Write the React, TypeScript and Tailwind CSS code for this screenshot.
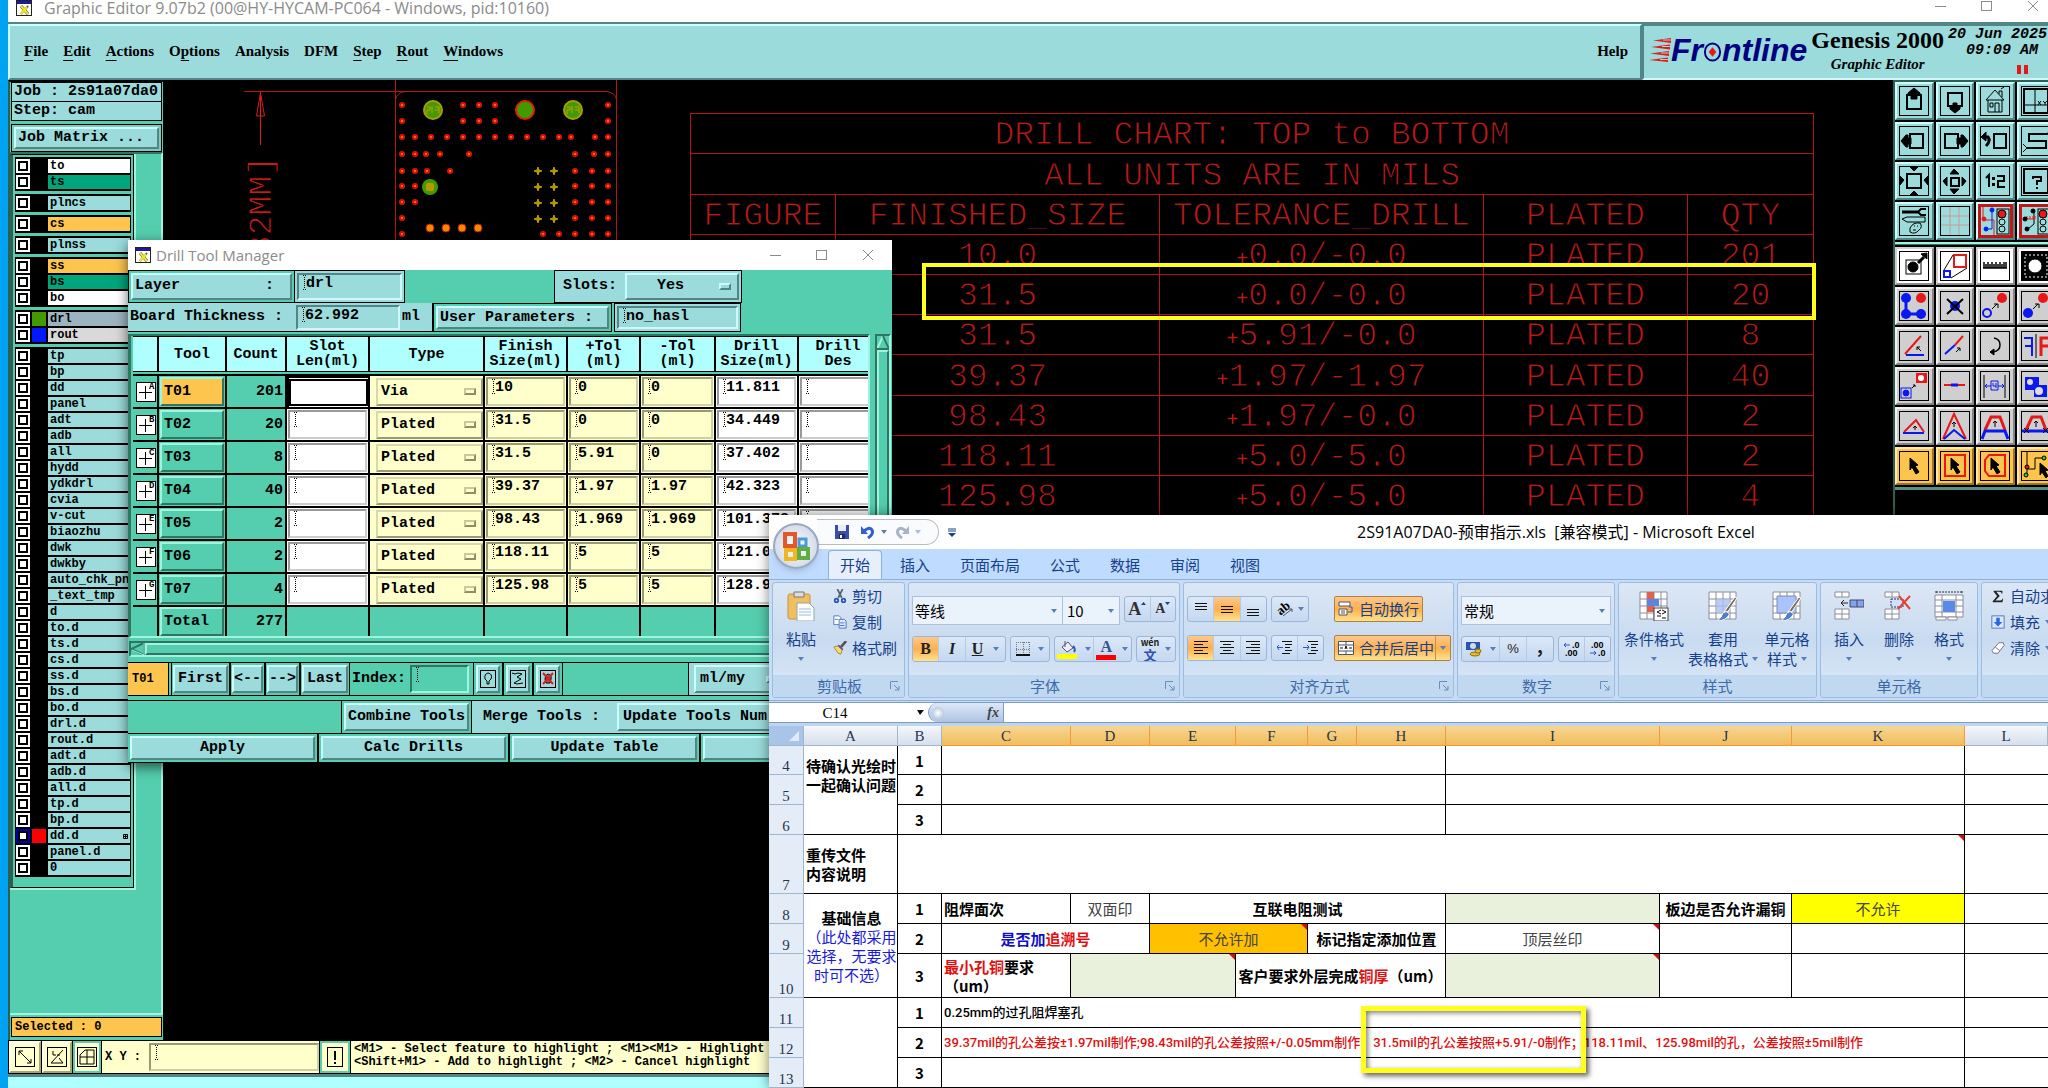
import React from "react";

/* ---------- shared style fragments ---------- */

const mono = "font-['Liberation_Mono','DejaVu_Sans_Mono',monospace] font-bold";
const cjk = "font-['Noto_Sans_CJK_SC','Open_Sans',sans-serif]";
const cyanUp =
  "bg-[#9bdbdb] border-2 border-t-[#c9ffff] border-l-[#c9ffff] border-b-[#528585] border-r-[#528585]";
const cyanDown =
  "bg-[#9bdbdb] border-2 border-t-[#528585] border-l-[#528585] border-b-[#d0f8f8] border-r-[#d0f8f8]";
const greenUp =
  "bg-[#54ceae] border-2 border-t-[#a0f3df] border-l-[#a0f3df] border-b-[#2f7561] border-r-[#2f7561]";
const greenDown =
  "bg-[#54ceae] border-2 border-t-[#2f7561] border-l-[#2f7561] border-b-[#a0f3df] border-r-[#a0f3df]";

function XLogo() {
  return (
    <svg viewBox="0 0 16 16" className="h-4 w-4 shrink-0">
      <rect x="0.5" y="0.5" width="15" height="15" fill="#fff" stroke="#222" />
      <rect x="1" y="1" width="14" height="3" fill="#1a1a9a" />
      <path d="M12 6l-7 8" stroke="#555" strokeWidth="2" />
      <path d="M5 6l7 8" stroke="#555" strokeWidth="3" />
      <path d="M5 6l7 8M11 7l-6 7" stroke="#f3e71d" strokeWidth="2" />
    </svg>
  );
}

function WindowButtons({ gap }: { gap: string }) {
  return (
    <div className={"flex items-center text-[#8b8b8b] " + gap}>
      <button aria-label="Minimize">
        <svg viewBox="0 0 12 12" className="h-3 w-3"><path d="M0 6.5h11" stroke="currentColor" /></svg>
      </button>
      <button aria-label="Maximize">
        <svg viewBox="0 0 12 12" className="h-3 w-3"><rect x="0.5" y="1.5" width="10" height="9" fill="none" stroke="currentColor" /></svg>
      </button>
      <button aria-label="Close">
        <svg viewBox="0 0 12 12" className="h-3 w-3"><path d="M1 1l10 10M11 1L1 11" stroke="currentColor" /></svg>
      </button>
    </div>
  );
}

/* ---------- Genesis header ---------- */

const menus: [string, string, string][] = [
  ["", "F", "ile"],
  ["", "E", "dit"],
  ["", "A", "ctions"],
  ["O", "p", "tions"],
  ["Analysis", "", ""],
  ["DFM", "", ""],
  ["", "S", "tep"],
  ["", "R", "out"],
  ["", "W", "indows"],
];

function MenuBar() {
  return (
    <header className="flex h-[56px] shrink-0 bg-[#9bdbdb] font-['Liberation_Serif',serif] text-[15px] font-bold text-black">
      <nav className={"flex flex-1 items-center gap-[15px] pr-3 pb-[2px] pl-[14px] " + cyanUp}>
        {menus.map(([a, u, b]) => (
          <button key={a + u + b} className="whitespace-nowrap">
            {a}
            {u && <span className="underline underline-offset-4">{u}</span>}
            {b}
          </button>
        ))}
        <button className="ml-auto">Help</button>
      </nav>
      <div className="flex w-[406px] shrink-0 items-start overflow-hidden border-2 border-t-[#528585] border-l-[#528585] border-r-0 border-b-[#d0f8f8] pl-[5px]">
        <div className="flex h-[48px] shrink-0 items-center" role="img" aria-label="Frontline">
          <svg viewBox="0 0 22 24" className="h-6 w-[22px]">
            <path d="M4 2.500L22 0v5zM2 9L21 6.500v5zM1 15.500L20 13v5zM0 22L19 19.500v4.500z" fill="#e81818" />
            <path d="M14 2h8M13 8.500h8M12 15h8M11 21.500h8" stroke="#9bdbdb" strokeWidth="1" />
          </svg>
          <div className="flex items-center font-['Liberation_Sans',sans-serif] text-[32px] leading-8 font-bold text-[#000080] italic">
            <span>Fr</span>
            <svg viewBox="0 0 20 20" className="mt-1 h-5 w-[19px]">
              <ellipse cx="10" cy="10" rx="8" ry="9" fill="none" stroke="#000080" strokeWidth="2" />
              <path d="M10 5l4 5-4 5-4-5z" fill="#e81818" />
            </svg>
            <span>ntline</span>
          </div>
        </div>
        <div className="ml-[4px] shrink-0 text-center">
          <div className="text-2xl leading-7">Genesis 2000</div>
          <div className="text-[15px] leading-5 italic">Graphic Editor</div>
        </div>
        <div className={"ml-[4px] shrink-0 text-[15px] leading-4 whitespace-pre italic " + mono}>
          <div className="mt-px">20 Jun 2025</div>
          <div>{"  09:09 AM"}</div>
          <div className="mt-[6px] ml-[69px] flex gap-[3px]">
            <i className="h-[9px] w-1 bg-[#e81818]" />
            <i className="h-[9px] w-1 bg-[#e81818]" />
          </div>
        </div>
      </div>
    </header>
  );
}

/* ---------- layer list ---------- */

type Layer = { name: string; bg?: string; swatch?: string; active?: boolean };
const plain = (s: string): Layer[] => s.split(" ").map((name) => ({ name }));

const layerGroups: Layer[][] = [
  [{ name: "to", bg: "bg-white" }, { name: "ts", bg: "bg-[#00a57c]" }],
  [{ name: "plncs" }],
  [{ name: "cs", bg: "bg-[#fdc54e]" }],
  [{ name: "plnss" }],
  [
    { name: "ss", bg: "bg-[#fdc54e]" },
    { name: "bs", bg: "bg-[#00a57c]" },
    { name: "bo", bg: "bg-white" },
  ],
  [
    { name: "drl", bg: "bg-[#9bb4c0]", swatch: "bg-[#439a00]" },
    { name: "rout", bg: "bg-[#d9d9d9]", swatch: "bg-[#0019ff]" },
  ],
  [
    ...plain(
      "tp bp dd panel adt adb all hydd ydkdrl cvia v-cut biaozhu dwk dwkby auto_chk_pn _text_tmp d to.d ts.d cs.d ss.d bs.d bo.d drl.d rout.d adt.d adb.d all.d tp.d bp.d",
    ),
    { name: "dd.d", swatch: "bg-[#ff0000]", active: true },
    ...plain("panel.d 0"),
  ],
];

function LayerRow({ layer }: { layer: Layer }) {
  return (
    <label className="flex h-4 items-center">
      <input
        type="checkbox"
        className={
          "h-[14px] w-[14px] shrink-0 appearance-none border-2 bg-white outline-2 -outline-offset-4 outline-black " +
          (layer.active ? "border-[#0000a8]" : "border-white")
        }
      />
      <span className={"mx-[2px] h-[14px] w-[14px] shrink-0 " + (layer.swatch ?? "bg-black")} />
      <span
        className={
          "flex h-[14px] flex-1 items-center justify-between overflow-hidden px-[2px] text-xs leading-[14px] " +
          (layer.bg ?? "bg-[#9bdbdb]")
        }
      >
        {layer.name}
        {layer.active && (
          <svg viewBox="0 0 5 5" className="h-[5px] w-[5px]">
            <path d="M.5.500h4v4h-4zM2.500 0v5M0 2.500h5" fill="none" stroke="#000" />
          </svg>
        )}
      </span>
    </label>
  );
}

function SidePanel() {
  return (
    <aside className={"flex w-[155px] shrink-0 flex-col border-t-2 border-l-2 border-black border-l-[#2f5f52] bg-[#54ceae] text-[15px] text-black " + mono}>
      <div className="mx-px border border-black bg-[#9bdbdb] px-[2px] leading-[18px]">Job : 2s91a07da0</div>
      <div className="mx-px border border-t-0 border-black bg-[#9bdbdb] px-[2px] leading-[18px]">Step: cam</div>
      <div className="mx-px mt-[3px] border border-black bg-[#7fc9bb] p-[2px]">
        <button className={"block h-[22px] w-full px-[2px] text-left leading-[18px] " + cyanUp}>Job Matrix ...</button>
      </div>
      <div className="flex flex-1 flex-col items-start border-t-2 border-r-2 border-b-2 border-t-[#2f7561] border-r-[#a0f3df] border-b-[#a0f3df]">
        <div className="w-[126px] border-r-2 border-b-2 border-r-[#a0f3df] border-b-[#a0f3df]">
          <div className="flex flex-col gap-[3px] border border-l-[3px] border-black border-l-[#2f5f52] px-[2px] pt-[2px] pb-[10px]">
            {layerGroups.map((g, i) => (
              <div key={i} className="border border-black bg-black">
                {g.map((l) => (
                  <LayerRow key={l.name} layer={l} />
                ))}
              </div>
            ))}
          </div>
        </div>
      </div>
      <div className="mx-px mt-[2px] mb-[3px] border border-black bg-[#fdc54e] px-[3px] text-xs leading-[18px]">Selected : 0</div>
    </aside>
  );
}

/* ---------- board drawing ---------- */

const dots: [number, number][] = [
  ...[402, 463, 479, 495, 608].map((x) => [x, 105] as [number, number]),
  ...[402, 463, 479, 495, 608].map((x) => [x, 121] as [number, number]),
  ...[402, 415, 431, 447, 463, 479, 495, 511, 527, 543, 559, 571, 595, 608].map((x) => [x, 137] as [number, number]),
  ...[402, 415, 426, 440, 469, 575, 594, 608].map((x) => [x, 154] as [number, number]),
  ...[402, 415, 427, 450, 575, 592, 608].map((x) => [x, 171] as [number, number]),
  ...[402, 415, 575, 592, 608].map((x) => [x, 186] as [number, number]),
  ...[402, 415, 575, 592, 608].map((x) => [x, 202] as [number, number]),
  ...[402, 575, 592, 608].map((x) => [x, 218] as [number, number]),
  ...[402, 543, 559, 575, 592, 608].map((x) => [x, 234] as [number, number]),
];

function Board() {
  return (
    <svg viewBox="163 80 500 170" className="absolute top-0 left-0 h-[170px] w-[500px]">
      <g fill="none" stroke="#b51414" strokeWidth="1">
        <path d="M244 91.500H607Q616 93 616.500 100" />
        <path d="M395.500 80V250M616.500 80V250M395.500 100Q397 92 406 91.500" />
        <path d="M260.500 92V145M260.500 93l-4 23h8z" stroke="#e01a1a" />
      </g>
      <text
        transform="translate(271 255) rotate(-90)"
        className="font-['Liberation_Mono',monospace] text-[33px]"
        fill="#c81a1a"
        stroke="#000"
        strokeWidth="1"
      >
        82MM]
      </text>
      {dots.map(([x, y]) => (
        <g key={x + "-" + y}>
          <circle cx={x} cy={y} r="3" fill="#e01000" />
          <circle cx={x} cy={y} r="1" fill="#f08a1a" />
        </g>
      ))}
      {[171, 187, 203, 219].flatMap((y) =>
        [538, 554].map((x) => (
          <path key={x + "-" + y} d={`M${x} ${y - 4}l1 3 3 1-3 1-1 3-1-3-3-1 3-1z`} fill="#b79a00" stroke="#b79a00" strokeWidth="1" />
        )),
      )}
      {[430, 446, 462, 478].map((x) => (
        <circle key={x} cx={x} cy="228" r="4" fill="#f08a00" stroke="#c02000" strokeWidth="1" />
      ))}
      {[433, 573].map((x) => (
        <g key={x} fill="none" stroke="#a8a000">
          <circle cx={x} cy="110" r="9" fill="#439a00" strokeWidth="2" />
          <path d={`M${x - 6} 107h3v3h-3v4M${x - 1} 106v7M${x + 2} 107h4v6M${x + 2} 110h4`} stroke="#c0a000" />
        </g>
      ))}
      <circle cx="525" cy="110" r="9" fill="#439a00" stroke="#e02000" strokeWidth="2" />
      <circle cx="430" cy="187" r="8" fill="#439a00" />
      <rect x="426" y="183" width="8" height="8" rx="2" fill="#b79a00" />
    </svg>
  );
}

const chartRows: [string, string, string, string][] = [
  ["10.0", "0.0/-0.0", "PLATED", "201"],
  ["31.5", "0.0/-0.0", "PLATED", "20"],
  ["31.5", "5.91/-0.0", "PLATED", "8"],
  ["39.37", "1.97/-1.97", "PLATED", "40"],
  ["98.43", "1.97/-0.0", "PLATED", "2"],
  ["118.11", "5.0/-5.0", "PLATED", "2"],
  ["125.98", "5.0/-5.0", "PLATED", "4"],
  ["", "", "", ""],
];

function DrillChart() {
  const c = "border-b border-r border-[#b51414] p-0 pt-[5px] font-normal";
  return (
    <div className="absolute top-[33px] left-[527px]">
      <table className="w-[1123px] table-fixed border-separate border-spacing-0 border-t border-l border-[#b51414] text-center font-['Liberation_Mono',monospace] text-[33px] leading-[34px] whitespace-nowrap text-[#b81a1a] [-webkit-text-stroke:1px_black]">
        <colgroup>
          <col className="w-[145px]" />
          <col className="w-[324px]" />
          <col className="w-[324px]" />
          <col className="w-[204px]" />
          <col className="w-[126px]" />
        </colgroup>
        <tbody>
          <tr className="h-10"><th colSpan={5} className={c}>DRILL CHART: TOP to BOTTOM</th></tr>
          <tr className="h-[41px]"><th colSpan={5} className={c}>ALL UNITS ARE IN MILS</th></tr>
          <tr className="h-10">
            {["FIGURE", "FINISHED_SIZE", "TOLERANCE_DRILL", "PLATED", "QTY"].map((h) => (
              <th key={h} className={c}>{h}</th>
            ))}
          </tr>
          {chartRows.map((r, i) => (
            <tr key={i} className={i === 3 ? "h-[41px]" : "h-10"}>
              <td className={c} />
              <td className={c}>{r[0]}</td>
              <td className={c}>
                {r[1] && <span className="text-xl [-webkit-text-stroke:0px]">+</span>}
                {r[1]}
              </td>
              <td className={c}>{r[2]}</td>
              <td className={c}>{r[3]}</td>
            </tr>
          ))}
        </tbody>
      </table>
      <div className="absolute top-[150px] left-[232px] h-[57px] w-[894px] border-4 border-[#ffff1a]" />
    </div>
  );
}

/* ---------- right tool palette ---------- */

const R = "#e81818";
const B = "#0a19f0";
const cursor = <path d="M11 7l8 7-3 1 4 6-3 2-4-7-2 3z" fill="#000" />;
const light = (extra: React.ReactNode) => (
  <>
    <rect x="17" y="3" width="12" height="25" fill="#9bdbdb" stroke="#000" strokeWidth="1" />
    <circle cx="22" cy="8" r="4" fill={R} stroke="#000" />
    <circle cx="22" cy="16" r="3" />
    <circle cx="22" cy="23" r="3" />
    {extra}
  </>
);

const iconRows: { tone: string; icons: React.ReactNode[] }[] = [
  {
    tone: "cyan",
    icons: [
      <><rect x="8" y="9" width="14" height="14" strokeWidth="2" /><path d="M15 2l6 5v2h-3v4h-6V9H9V7z" fill="#000" /></>,
      <><rect x="8" y="7" width="14" height="13" strokeWidth="2" /><path d="M15 27l5-4v-2h-3v-4h-4v4h-3v2z" fill="#000" /></>,
      <path d="M6 14L15 4l9 10zM8 14v12h14V14M15 26V17h4v9M10 17h3v4h-3zM19 8V5h3v6M21 3l3-2" />,
      <><rect x="3" y="3" width="24" height="24" strokeWidth="2" /><path d="M14 3v24M3 19h24M17 15l3 4M20 15l-3 4M22 15l2 2 2-2M24 17v2" /></>,
    ],
  },
  {
    tone: "cyan",
    icons: [
      <><rect x="11" y="8" width="13" height="14" strokeWidth="2" /><path d="M2 15l5-6h2v3h3v6H9v3H7z" fill="#000" /></>,
      <><rect x="5" y="8" width="13" height="14" strokeWidth="2" /><path d="M28 15l-5-6h-2v3h-4v6h4v3h2z" fill="#000" /></>,
      <><rect x="14" y="8" width="12" height="14" strokeWidth="2" /><path d="M4 11h4q3 4-2 9" strokeWidth="3" /><path d="M1 11l5-5v9z" fill="#000" /></>,
      <><path d="M26 8H8v7h17v7H6" strokeWidth="2" /><path d="M26 8l3-4M26 8l3 2M6 22l-4-4M6 22l-4 4" /></>,
    ],
  },
  {
    tone: "cyan",
    icons: [
      <><rect x="8" y="8" width="14" height="14" strokeWidth="2" /><path d="M11 1h8l-4 4zM11 29h8l-4-4zM1 10v9l4-5zM29 10v9l-4-5z" fill="#000" /></>,
      <><rect x="11" y="12" width="8" height="8" strokeWidth="2" /><path d="M10 8h9l-5-5zM10 23h9l-5 5zM7 11v9l-4-5zM22 11v9l4-5z" fill="#000" /></>,
      <><path d="M6 12l3-3v12" strokeWidth="2" /><path d="M13 12h1v1h-1zM13 18h1v1h-1z" strokeWidth="2" /><path d="M17 10h7v5h-6v6h7" strokeWidth="2" /></>,
      <><rect x="3" y="3" width="24" height="24" strokeWidth="2" /><path d="M12 13v-2h8v4h-4v4M16 21v2" strokeWidth="2" /></>,
    ],
  },
  {
    tone: "cyan",
    icons: [
      <><path d="M3 6h16" strokeWidth="3" /><path d="M27 3h-5l-3 3 3 3h5" strokeWidth="2" /><path d="M3 13l5-2h18v5H8z" /><path d="M11 22q3-6 10-5 3 4-1 7-4 5-9 2zM15 20h1M18 20h1M14 24h3" /></>,
      <path d="M10 1v28M19 1v28M1 10h28M1 19h28" stroke="#c99" />,
      light(<><path d="M3 1v13h11v15" stroke={R} strokeWidth="1" /><path d="M12 5v18H6" stroke={B} strokeWidth="1" /><circle cx="12" cy="4" r="2" fill={B} stroke={B} /><circle cx="4" cy="13" r="2" fill={R} stroke={R} /><circle cx="6" cy="23" r="2" fill={B} stroke={B} /></>),
      light(<><path d="M13 5v13l-6 5" /><path d="M6 10v3h8v-3M9 10v3M12 10v3" stroke={R} /><circle cx="12" cy="5" r="2" fill="#000" /><circle cx="4" cy="13" r="2" fill="#000" /><circle cx="6" cy="23" r="2" fill="#000" /></>),
    ],
  },
];

const iconRows2: { tone: string; icons: React.ReactNode[] }[] = [
  {
    tone: "white",
    icons: [
      <><rect x="7" y="9" width="15" height="14" /><circle cx="14" cy="16" r="5" fill="#000" /><path d="M19 12l6-6" strokeWidth="3" /><path d="M28 2v6l-6-5z" fill="#000" /></>,
      <><rect x="14" y="4" width="12" height="12" stroke={R} strokeWidth="2" /><rect x="4" y="20" width="6" height="6" stroke={B} strokeWidth="2" /><path d="M4 19L13 4M11 27l16-10" /></>,
      <path d="M3 17h24M4 11v6M6 13v4M8 11v6M10 13v4M12 11v6M14 13v4M16 11v6M18 13v4M20 11v6M22 13v4M24 11v6M26 11v6" strokeWidth="1.5" />,
      <><rect x="1" y="1" width="28" height="28" fill="#000" /><rect x="4" y="4" width="22" height="22" stroke="#fff" strokeDasharray="2 2" /><circle cx="14" cy="15" r="7" fill="#fff" /></>,
    ],
  },
  {
    tone: "grey",
    icons: [
      <><path d="M7 8v15h15" stroke={B} strokeWidth="3" /><g fill={B} stroke="none"><circle cx="7" cy="7" r="5" /><circle cx="7" cy="23" r="5" /><circle cx="22" cy="23" r="5" /></g><circle cx="22" cy="7" r="5" fill={R} stroke="none" /></>,
      <><circle cx="15" cy="15" r="5" fill={B} stroke="none" /><path d="M7 8l16 15M23 8L7 23" strokeWidth="2" /></>,
      <><circle cx="7" cy="22" r="4" stroke={B} strokeWidth="2" /><circle cx="22" cy="7" r="5" fill={R} stroke="none" /><path d="M12 18l5-5M14 13h4v4" /></>,
      <><circle cx="7" cy="22" r="5" fill={B} stroke="none" /><circle cx="22" cy="7" r="5" fill={R} stroke="none" /><path d="M12 18l5-5M14 13h4v4" /></>,
    ],
  },
  {
    tone: "grey",
    icons: [
      <><path d="M6 23L22 5" stroke={R} strokeWidth="2" /><path d="M7 24h18" stroke={B} strokeWidth="2" /><path d="M22 20l-4-4M18 19v-3h3" /></>,
      <><path d="M15 14l8-9" stroke={R} strokeWidth="2" /><path d="M5 23l10-9" stroke={B} strokeWidth="2" /><path d="M16 21l4-4M17 17h3v3" /></>,
      <><path d="M14 7q6 1 6 7 0 6-7 7" strokeWidth="1.5" /><path d="M10 21l4-3v6z" fill="#000" /></>,
      <><path d="M15 3v24" /><path d="M3 7h8v18M11 15H4" stroke={B} strokeWidth="2" /><path d="M28 7h-8v18M20 15h7" stroke={R} strokeWidth="3" /></>,
    ],
  },
  {
    tone: "grey",
    icons: [
      <><rect x="2" y="17" width="10" height="10" stroke={B} /><circle cx="7" cy="22" r="3" fill={B} stroke={B} /><rect x="17" y="2" width="11" height="10" fill={R} stroke="none" /><circle cx="22" cy="7" r="3" fill="#fff" stroke="none" /><path d="M13 17l3-3M14 14h2v2" /></>,
      <><path d="M4 14h21" stroke={R} strokeWidth="2" /><path d="M11 14h7" stroke={B} strokeWidth="3" /></>,
      <><path d="M4 4v23M25 4v23" /><path d="M11 10h7v9h-7zM13 12v3h3M16 12v5M5 15h6M18 15h6M7 13l-2 2 2 2M22 13l2 2-2 2" stroke={B} /></>,
      <><path d="M4 6h14v8h8v12H13v-7H4z" fill={B} stroke="none" /><circle cx="9" cy="11" r="3" fill="#ddd" stroke="none" /><circle cx="18" cy="20" r="4" fill="#ddd" stroke="none" /></>,
    ],
  },
  {
    tone: "grey",
    icons: [
      <><path d="M5 21L17 9l8 12" stroke={R} strokeWidth="2" /><path d="M4 22h21" stroke={B} strokeWidth="2" /><path d="M16 19v-4M14 17l2-2 2 2" /></>,
      <><path d="M3 28L14 3l12 25" stroke={R} strokeWidth="2" /><path d="M4 28l10-9 11 9" stroke={B} strokeWidth="2" /><path d="M14 16v-5M12 13l2-2 2 2" /></>,
      <><path d="M5 19l6-13h9l5 13" stroke={R} strokeWidth="3" /><path d="M2 28l3-8h20l3 8" stroke={B} strokeWidth="3" /><path d="M15 16v-6M13 12l2-2 2 2" /></>,
      <><path d="M5 19l6-13h9l5 13" stroke={R} strokeWidth="3" /><path d="M1 20h28" stroke={B} strokeWidth="3" /><path d="M15 16v-6M13 12l2-2 2 2M3 17l5 5M8 17l-5 5M22 17l5 5M27 17l-5 5" /></>,
    ],
  },
  {
    tone: "orange",
    icons: [
      cursor,
      <><rect x="5" y="4" width="20" height="21" stroke={R} strokeWidth="2" />{cursor}</>,
      <><path d="M9 4h16v21H9l-4-5V9z" stroke={R} strokeWidth="2" />{cursor}</>,
      <><path d="M6 1v14" /><path d="M23 7h-9v11H6v6" /><circle cx="23" cy="7" r="2" fill="#3c3" /><circle cx="6" cy="16" r="2" fill={R} /><circle cx="5" cy="24" r="2" fill="#3c3" /><path d="M19 12l8 7-3 1 3 5-2 2-4-6-2 3z" fill="#000" /></>,
    ],
  },
];

const tones: Record<string, string> = {
  cyan: cyanUp,
  white: "bg-white border-2 border-t-[#d0d0d0] border-l-[#d0d0d0] border-b-[#8c8c8c] border-r-[#8c8c8c]",
  grey: "bg-[#cfcfcf] border-2 border-t-[#f2f2f2] border-l-[#f2f2f2] border-b-[#858585] border-r-[#858585]",
  orange: "bg-[#fdc54e] border-2 border-t-[#ffe8a8] border-l-[#ffe8a8] border-b-[#9a7526] border-r-[#9a7526]",
};

function IconGrid({ rows }: { rows: { tone: string; icons: React.ReactNode[] }[] }) {
  return (
    <div className="grid w-[160px] grid-cols-4 gap-[2px] bg-black pb-[2px]">
      {rows.flatMap((row, r) =>
        row.icons.map((icon, c) => {
          const hot = row.tone === "cyan" && r === 3 && c > 1;
          return (
            <button
              key={r + "-" + c}
              aria-label={"Tool " + (r * 4 + c + 1)}
              className={"flex h-[38px] items-center justify-center " + tones[row.tone] + (hot ? " outline-[3px] -outline-offset-[5px] outline-[#c81414]" : "")}
            >
              <svg viewBox="0 0 30 30" className="h-[30px] w-[30px] shrink-0" fill="none" stroke="#000" strokeWidth="1">
                {!hot && <rect x="0.5" y="0.5" width="29" height="29" />}
                {icon}
              </svg>
            </button>
          );
        }),
      )}
    </div>
  );
}

function ToolPalette() {
  return (
    <div className="w-[155px] shrink-0 overflow-hidden border-t-2 border-l-2 border-[#2f5f52] bg-black">
      <IconGrid rows={iconRows} />
      <div className="mb-[2px] h-[3px] border-t-2 border-[#a0f3df] bg-[#2f7561]" />
      <IconGrid rows={iconRows2} />
      <div className="h-[3px] bg-[#5a8f86]" />
    </div>
  );
}

/* ---------- text fields ---------- */

function IBeam() {
  return (
    <svg viewBox="0 0 3 15" className="h-[15px] w-[3px] shrink-0">
      <path d="M1.500 2v12" stroke="#000" strokeDasharray="1 1" />
      <path d="M0 .500h1M2 .500h1M0 14.500h1M2 14.500h1" stroke="#000" />
    </svg>
  );
}

function Field({ tone, value, label, className = "" }: { tone: string; value?: string; label: string; className?: string }) {
  return (
    <div className={"flex items-start overflow-hidden border-2 pl-1 " + tone + " " + className}>
      <IBeam />
      <input aria-label={label} defaultValue={value} className="h-[17px] w-full min-w-0 bg-transparent leading-[17px] outline-none" />
    </div>
  );
}

const yellowIn = "bg-[#ffffcc] border-t-[#9a9a72] border-l-[#9a9a72] border-b-[#cfcfa4] border-r-[#cfcfa4]";
const whiteIn = "bg-white border-t-[#999] border-l-[#999] border-b-[#ccc] border-r-[#ccc]";

/* ---------- bottom bar ---------- */

function StatusBar() {
  const btn = "flex h-8 items-center justify-center border-2 ";
  const yellow = "border-t-[#ffffee] border-l-[#ffffee] border-b-[#a5a57a] border-r-[#a5a57a] bg-[#ffffcc]";
  return (
    <footer className="shrink-0 bg-black">
      <div className={"flex h-[34px] gap-px border border-black text-black " + mono}>
        <button aria-label="Scale" className={btn + "w-8 " + yellow}>
          <svg viewBox="0 0 22 22" className="h-[22px] w-[22px]" fill="none" stroke="#000"><rect x="1.500" y="1.500" width="19" height="19" /><path d="M5 5l12 12M5 9V5h4M17 13v4h-4" /></svg>
        </button>
        <button aria-label="Angle" className={btn + "w-[30px] " + yellow}>
          <svg viewBox="0 0 22 22" className="h-[22px] w-[22px]" fill="none" stroke="#000"><rect x="1.500" y="1.500" width="19" height="19" /><path d="M17 4L5 17h12M7 5v4h3M13 12l4 5M11 9h3" /></svg>
        </button>
        <button aria-label="Grid" className={btn + "w-7 border-[#54ceae] bg-[#ffffcc]"}>
          <svg viewBox="0 0 22 22" className="h-[22px] w-[22px]" fill="none" stroke="#000"><rect x="1.500" y="1.500" width="19" height="19" /><path d="M4 18V9l5-5h9v14zM11 4v14M4 11h14" /></svg>
        </button>
        <div className="flex items-center gap-2 bg-[#ffffcc] pl-[3px] text-xs">
          X Y :
          <Field label="Coordinates" tone={yellowIn} className="h-7 w-[170px]" />
        </div>
        <button aria-label="Alert" className={btn + "w-[30px] border-[#54ceae] bg-[#ffffcc]"}>
          <svg viewBox="0 0 18 22" className="h-[22px] w-[18px]" fill="none" stroke="#000"><rect x="1.500" y="1.500" width="15" height="19" /><path d="M9 5v9M9 16v2" strokeWidth="2" /></svg>
        </button>
        <div className="flex-1 overflow-hidden bg-[#ffffcc] pt-[2px] pl-[3px] text-xs leading-[13px] whitespace-pre">
          <div>{"<M1> - Select feature to highlight ; <M1><M1> - Highlight next"}</div>
          <div>{"<Shift+M1> - Add to highlight ; <M2> - Cancel highlight"}</div>
        </div>
      </div>
      <div className="h-[14px] border-t-[3px] border-[#528585] bg-[#b0ffff]" />
    </footer>
  );
}

/* ---------- drill tool manager ---------- */

function OptionMark({ tone }: { tone: string }) {
  return <span className={"pointer-events-none h-[7px] w-3 shrink-0 border-2 " + tone} />;
}
const cyanMark = "border-t-[#c9ffff] border-l-[#c9ffff] border-b-[#528585] border-r-[#528585]";
const yellowMark = "border-t-[#c9c99a] border-l-[#c9c99a] border-b-[#8d8d66] border-r-[#8d8d66]";

type Tool = { id: string; mark: string; count: string; type: string; size: string; p: string; m: string; drill: string };
const tools: Tool[] = [
  { id: "T01", mark: "A", count: "201", type: "Via", size: "10", p: "0", m: "0", drill: "11.811" },
  { id: "T02", mark: "B", count: "20", type: "Plated", size: "31.5", p: "0", m: "0", drill: "34.449" },
  { id: "T03", mark: "C", count: "8", type: "Plated", size: "31.5", p: "5.91", m: "0", drill: "37.402" },
  { id: "T04", mark: "D", count: "40", type: "Plated", size: "39.37", p: "1.97", m: "1.97", drill: "42.323" },
  { id: "T05", mark: "E", count: "2", type: "Plated", size: "98.43", p: "1.969", m: "1.969", drill: "101.378" },
  { id: "T06", mark: "F", count: "2", type: "Plated", size: "118.11", p: "5", m: "5", drill: "121.063" },
  { id: "T07", mark: "G", count: "4", type: "Plated", size: "125.98", p: "5", m: "5", drill: "128.937" },
];

function ToolTable() {
  const h = "h-9 border border-l-0 border-black border-r-2 bg-[#b0ffff] p-0 font-bold text-center";
  const c = "h-[33px] border-b-2 border-r-2 border-black p-0";
  return (
    <table className="w-[746px] table-fixed border-separate border-spacing-0 leading-[15px]">
      <colgroup>
        <col className="w-[26px]" />
        <col className="w-[68px]" />
        <col className="w-[60px]" />
        <col className="w-[83px]" />
        <col className="w-[115px]" />
        <col className="w-[83px]" />
        <col className="w-[73px]" />
        <col className="w-[75px]" />
        <col className="w-[83px]" />
        <col className="w-[80px]" />
      </colgroup>
      <thead>
        <tr>
          {[[""], ["Tool"], ["Count"], ["Slot", "Len(ml)"], ["Type"], ["Finish", "Size(ml)"], ["+Tol", "(ml)"], ["-Tol", "(ml)"], ["Drill", "Size(ml)"], ["Drill", "Des"]].map((lines, i) => (
            <th key={i} className={h}>
              {lines.map((l) => (
                <div key={l}>{l}</div>
              ))}
            </th>
          ))}
        </tr>
      </thead>
      <tbody>
        <tr><td colSpan={10} className="h-1 border-b-2 border-black bg-[#54ceae] p-0" /></tr>
        {tools.map((t, i) => (
          <tr key={t.id}>
            <td className={c}>
              <svg viewBox="0 0 20 20" className="ml-[3px] h-5 w-5">
                <rect x="0.500" y="0.500" width="19" height="19" fill="#fff" stroke="#000" />
                <path d="M3 10.500h13M9.500 4v13" stroke="#000" />
                <text x="13" y="7" className="font-['Liberation_Mono',monospace] text-[9px]">{t.mark}</text>
              </svg>
            </td>
            <td className={c}>
              <button className={"ml-px block h-[29px] w-[64px] px-[2px] text-left " + greenUp + (i === 0 ? " bg-[#fdc54e]!" : "")}>{t.id}</button>
            </td>
            <td className={c + " pr-[2px] text-right"}>{t.count}</td>
            <td className={c + " bg-white" + (i === 0 ? " border-t-2 border-l-2" : "")}>
              {i === 0 ? (
                <input aria-label="Slot T01" className="block h-[27px] w-full bg-white outline-2 -outline-offset-2 outline-black" />
              ) : (
                <Field label={"Slot " + t.id} tone={whiteIn} className="mx-px h-[29px]" />
              )}
            </td>
            <td className={c + " bg-[#ffffcc]"}>
              <div className="ml-[6px] flex h-[28px] items-center border-2 border-t-[#d8d8ac] border-l-[#d8d8ac] border-b-[#9a9a72] border-r-[#9a9a72] pr-[5px]">
                <select aria-label={"Type " + t.id} defaultValue={t.type} className="h-5 min-w-0 flex-1 appearance-none bg-transparent pl-[3px] font-bold outline-none">
                  <option>{t.type}</option>
                </select>
                <OptionMark tone={yellowMark} />
              </div>
            </td>
            <td className={c + " bg-[#ffffcc]"}><Field label={"Finish size " + t.id} tone={yellowIn} value={t.size} className="mx-px h-[29px]" /></td>
            <td className={c + " bg-[#ffffcc]"}><Field label={"Plus tolerance " + t.id} tone={yellowIn} value={t.p} className="mx-px h-[29px]" /></td>
            <td className={c + " bg-[#ffffcc]"}><Field label={"Minus tolerance " + t.id} tone={yellowIn} value={t.m} className="mx-px h-[29px]" /></td>
            <td className={c + " bg-white"}><Field label={"Drill size " + t.id} tone={whiteIn} value={t.drill} className="mx-px h-[29px]" /></td>
            <td className={c + " border-r-0 bg-white"}><Field label={"Drill designator " + t.id} tone={whiteIn} className="ml-px h-[29px] border-r-0" /></td>
          </tr>
        ))}
        <tr>
          <td className="h-[29px] border-r-2 border-black p-0" />
          <td className="border-r-2 border-black p-0">
            <button className={"mx-px block h-[29px] w-[64px] px-[2px] text-left " + greenUp}>Total</button>
          </td>
          <td className="border-r-2 border-black p-0 pr-[2px] text-right">277</td>
          {[0, 1, 2, 3, 4, 5, 6].map((k) => (
            <td key={k} className="border-r-2 border-black p-0" />
          ))}
        </tr>
      </tbody>
    </table>
  );
}

function DrillToolManager() {
  const frame = "flex border border-black p-[2px] ";
  return (
    <section className={"absolute top-[240px] left-[128px] w-[764px] bg-[#54ceae] text-[15px] text-black shadow-[0_4px_12px_rgba(0,0,0,0.6)] " + mono}>
      <div className="flex h-[30px] items-center gap-[5px] bg-white pr-[18px] pl-[7px] font-['Open_Sans',sans-serif] text-[15px] font-normal text-[#8b8b8b]">
        <XLogo />
        <span className="flex-1">Drill Tool Manager</span>
        <WindowButtons gap="gap-[34px]" />
      </div>
      <div className="flex h-[33px]">
        <div className={frame + "w-[167px]"}>
          <button className={"flex flex-1 items-center justify-between pr-4 pl-[2px] " + cyanUp}><span>Layer</span><span>:</span></button>
        </div>
        <div className={frame + "w-[110px] border-l-0 bg-[#9bdbdb]"}><Field label="Layer" value="drl" tone={cyanDown} className="flex-1" /></div>
        <label className={frame + "ml-[149px] w-[188px] items-center gap-2 bg-[#9bdbdb] pl-2"}>
          Slots:
          <div className={"flex h-full flex-1 items-center pr-[6px] " + cyanUp}>
            <select className="flex-1 appearance-none bg-transparent pl-[30px] font-bold outline-none"><option>Yes</option></select>
            <OptionMark tone={cyanMark} />
          </div>
        </label>
      </div>
      <div className="flex h-[29px]">
        <label className="flex w-[306px] items-center gap-4 border-r-2 border-b border-black bg-[#9bdbdb] pl-[2px] whitespace-nowrap">
          Board Thickness :
          <Field label="Board thickness" value="62.992" tone={cyanDown} className="-ml-[3px] h-[25px] w-[104px]" />
          <span className="-ml-[14px]">ml</span>
        </label>
        <div className={frame + "w-[178px] border-l-0"}>
          <button className={"flex-1 pl-[2px] text-left leading-5 " + cyanUp}>User Parameters :</button>
        </div>
        <div className={frame + "ml-[2px] w-[127px] bg-[#9bdbdb]"}><Field label="User parameters" value="no_hasl" tone={cyanDown} className="flex-1" /></div>
      </div>
      <div className="mt-[2px] flex justify-between pr-px">
        <div className="w-[742px] overflow-hidden border-t-2 border-r-2 border-b-2 border-l-[3px] border-t-[#2f7561] border-r-[#a0f3df] border-b-[#a0f3df] border-l-[#2f7561] pl-[2px]">
          <ToolTable />
        </div>
        <div className={"w-4 " + greenDown}>
          <svg viewBox="0 0 12 14" className="h-[14px] w-3"><path d="M6 0L0 13h12z" fill="#54ceae" stroke="#a0f3df" strokeWidth="2" /><path d="M6 0l6 13H0" fill="none" stroke="#2f7561" strokeWidth="2" /></svg>
          <div className="h-[280px] border-2 border-t-[#a0f3df] border-l-[#a0f3df] border-b-[#2f7561] border-r-[#2f7561]" />
        </div>
      </div>
      <div className={"mt-[3px] mr-5 ml-px flex h-4 " + greenDown}>
        <svg viewBox="0 0 14 12" className="h-3 w-[14px]"><path d="M0 6L13 0v12z" fill="#54ceae" stroke="#2f7561" strokeWidth="2" /><path d="M1 7l12 5V0" fill="none" stroke="#a0f3df" strokeWidth="1" /></svg>
        <div className="flex-1 border-2 border-t-[#a0f3df] border-l-[#a0f3df] border-b-[#2f7561] border-r-[#2f7561]" />
      </div>
      <div className="mt-[5px] flex h-[34px] border-y border-black">
        <div className="mr-[2px] flex w-[41px] items-center border-r border-black bg-[#fdc54e] pl-1 text-xs">T01</div>
        {[["First", "w-[59px]"], ["<--", "w-[35px]"], ["-->", "w-[35px]"], ["Last", "w-[50px]"]].map(([l, w]) => (
          <div key={l} className={"flex border-x border-black px-px py-[2px] " + w}>
            <button className={"flex-1 leading-6 whitespace-nowrap " + cyanUp}>{l}</button>
          </div>
        ))}
        <label className="flex items-center gap-1 pl-[2px]">
          Index:
          <Field label="Index" tone={greenDown} className="h-7 w-[59px]" />
        </label>
        <div className="ml-1 flex">
          {[
            <path key="a" d="M8 3q5 1 3 6l-2 2v3H7v-3L5 9Q4 4 8 3z" />,
            <path key="b" d="M2 3l3 1 3-1 4 1-5 3 4 2-7 4 3 1 6-1" />,
            <path key="c" d="M3 3l10 11M13 3L3 14" stroke="#e81818" strokeWidth="2" />,
          ].map((d, i) => (
            <div key={i} className="flex w-[30px] border-x border-black p-[2px]">
              <button aria-label={"Display " + (i + 1)} className={"flex flex-1 items-center justify-center " + cyanUp}>
                <svg viewBox="0 0 16 18" className="h-[18px] w-4" fill="none" stroke="#000"><rect x="0.500" y="0.500" width="15" height="17" />{i === 2 && <path d="M8 4q4 1 3 5l-1 4H6L5 9q0-4 3-5z" fill="#777" />}{d}</svg>
              </button>
            </div>
          ))}
        </div>
        <div className="ml-auto flex w-[204px] border-l border-black bg-[#9bdbdb] p-[2px] pl-[5px]">
          <div className={"flex w-[90px] items-center pr-1 " + cyanUp}>
            <select aria-label="Units" className="min-w-0 flex-1 appearance-none bg-transparent pl-1 font-bold outline-none"><option>ml/my</option></select>
            <OptionMark tone={cyanMark} />
          </div>
        </div>
      </div>
      <div className="mt-1 flex h-[34px] border-y border-black">
        <div className="ml-[213px] flex w-[131px] border-x border-black p-[2px]">
          <button className={"flex-1 whitespace-nowrap " + cyanUp}>Combine Tools</button>
        </div>
        <div className="flex flex-1 items-center gap-[17px] bg-[#9bdbdb] py-[2px] pl-[11px] whitespace-nowrap">
          Merge Tools :
          <button className={"h-full flex-1 overflow-hidden pl-1 text-left " + cyanUp}>Update Tools Num</button>
        </div>
      </div>
      <div className="grid h-[29px] grid-cols-4 border-b border-black">
        {["Apply", "Calc Drills", "Update Table", "Close"].map((l) => (
          <div key={l} className="flex border-r-2 border-black p-[2px]">
            <button className={"flex-1 leading-5 " + cyanUp}>{l}</button>
          </div>
        ))}
      </div>
    </section>
  );
}

/* ---------- Excel ---------- */

function Caret({ className = "" }: { className?: string }) {
  return (
    <svg viewBox="0 0 6 4" className={"h-1 w-[6px] shrink-0 " + className}>
      <path d="M0 0h6L3 4z" fill="#5a7fb8" />
    </svg>
  );
}

const box = "flex h-[26px] items-stretch overflow-hidden rounded-[3px] border border-[#9ab6dc] bg-linear-to-b from-[#dbe8f7] to-[#c5d8f0] divide-x divide-[#b4cae6]";
const hot = "bg-linear-to-b from-[#fcc88a] via-[#fdb04c] to-[#ffe28c]";

function Lines({ d }: { d: string }) {
  return (
    <svg viewBox="0 0 16 16" className="h-4 w-4" stroke="#111" strokeWidth="1">
      <path d={d} />
    </svg>
  );
}
const leftLines = "M1 1.500h14M1 4.500h9M1 7.500h14M1 10.500h9M1 13.500h14";
const centerLines = "M1 1.500h14M4 4.500h8M1 7.500h14M4 10.500h8M1 13.500h14";
const rightLines = "M1 1.500h14M6 4.500h9M1 7.500h14M6 10.500h9M1 13.500h14";

function Group({ label, width, launcher, children }: { label: string; width: string; launcher?: boolean; children: React.ReactNode }) {
  return (
    <section className={"flex h-[116px] shrink-0 flex-col overflow-hidden rounded-[3px] border border-[#9ebbe0] bg-linear-to-b from-[#dce7f5] via-[#c9dbf0] to-[#dbe9f8] " + width}>
      <div className="flex-1">{children}</div>
      <div className="flex h-[22px] shrink-0 items-center bg-[#c0d8f0] text-[#3e6aaa]">
        <span className="flex-1 text-center leading-5">{label}</span>
        {launcher && (
          <svg viewBox="0 0 10 10" className="mr-1 -ml-4 h-[10px] w-[10px]" fill="none" stroke="#6a8dbd">
            <path d="M.500 8V.500H8M4 4l5 5M9 5v4H5" />
          </svg>
        )}
      </div>
    </section>
  );
}

function Big({ lines, caret, icon, width }: { lines: string[]; caret?: boolean; icon: React.ReactNode; width: string }) {
  return (
    <button className={"flex shrink-0 flex-col items-center " + width}>
      <svg viewBox="0 0 30 30" className="mt-2 mb-2 h-[30px] w-[30px]">{icon}</svg>
      {lines.map((l, i) => (
        <span key={l} className="flex items-center gap-1 leading-5 whitespace-nowrap">
          {l}
          {caret && i === 1 && <Caret />}
        </span>
      ))}
      {lines.length === 1 && <Caret className="mt-2" />}
    </button>
  );
}

const gridPath = (
  <><rect x="1" y="1" width="27" height="27" fill="#fff" /><path d="M1 1h27v27H1zM1 8h27M1 15h27M1 22h27M8 1v27M15 1v27M22 1v27" fill="none" stroke="#8c8c9c" /></>
);
const brush = <path d="M29 7L19 22l-3-1L27 6zM19 20l2 3q-3 7-11 6 4-2 5-7z" fill="#7a6a5a" stroke="#fff" strokeWidth="1" />;
const brushTip = <path d="M18 21l3 2q-3 6-11 6 4-2 5-6z" fill="#4a7fd0" />;

function Small({ icon, children }: { icon: React.ReactNode; children: React.ReactNode }) {
  return (
    <button className="flex h-[26px] items-center gap-[5px] whitespace-nowrap">
      <svg viewBox="0 0 16 16" className="h-[14px] w-[14px]">{icon}</svg>
      {children}
    </button>
  );
}

function Ribbon() {
  const cell = "flex items-center justify-center ";
  return (
    <div className="flex h-[122px] shrink-0 gap-[3px] overflow-hidden border-t border-b border-[#8fb0dd] bg-[#c7dcf5] pt-[2px] pl-[3px] text-[15px] text-[#15428b]">
      <Group label="剪贴板" width="w-[133px]" launcher>
        <div className="flex">
          <Big
            width="w-[56px]"
            lines={["粘贴"]}
            icon={<><rect x="2" y="3" width="22" height="25" rx="2" fill="#f0bf62" stroke="#c8923c" /><path d="M8 1h10v5H8z" fill="#ddd" stroke="#777" /><path d="M11 12h12l5 5v13H11z" fill="#fff" stroke="#8aa" /><path d="M13 18h12M13 21h12M13 24h12" stroke="#9bb8dd" /></>}
          />
          <div className="flex flex-col pl-1">
            <Small icon={<><path d="M5 0l5 10M11 0L6 10" stroke="#567" strokeWidth="2" /><circle cx="4" cy="13" r="2" fill="none" stroke="#2a56b0" strokeWidth="2" /><circle cx="12" cy="13" r="2" fill="none" stroke="#2a56b0" strokeWidth="2" /></>}>剪切</Small>
            <Small icon={<><path d="M1 1h6l2 2v8H1z" fill="#fff" stroke="#4a70b8" /><path d="M7 5h6l2 2v8H7z" fill="#dce8ff" stroke="#4a70b8" /><path d="M8 9h5M8 12h5M2 5h4" stroke="#4a70b8" /></>}>复制</Small>
            <Small icon={<><path d="M1 7l6-2 4 4-2 6-3-1z" fill="#f5dc6a" stroke="#a08030" /><path d="M9 7l6-7" stroke="#555" strokeWidth="3" /><path d="M6 5l5 5" stroke="#6a4aa0" strokeWidth="2" /></>}>格式刷</Small>
          </div>
        </div>
      </Group>

      <Group label="字体" width="w-[272px]" launcher>
        <div className="flex flex-col gap-[11px] px-[3px] pt-[13px]">
          <div className="flex h-[29px] gap-[4px]">
            <div className="flex items-center border border-[#abc1de] bg-[#eaf2fb] text-black">
              <label className="flex h-full w-[150px] items-center border-r border-[#abc1de] pr-[5px]">
                <select aria-label="Font" className="min-w-0 flex-1 appearance-none bg-transparent pl-[2px] leading-5 outline-none"><option>等线</option></select>
                <Caret />
              </label>
              <label className="flex h-full w-[56px] items-center pr-[5px]">
                <select aria-label="Font size" className="min-w-0 flex-1 appearance-none bg-transparent pl-1 leading-5 outline-none"><option>10</option></select>
                <Caret />
              </label>
            </div>
            <div className={box + " w-[52px] font-['Liberation_Serif',serif] font-bold text-[#333]"}>
              <button aria-label="Grow font" className={cell + "flex-1 text-lg"}>
                A<svg viewBox="0 0 5 14" className="h-[14px] w-[5px]"><path d="M0 3h5L2.500 0z" fill="#15428b" /></svg>
              </button>
              <button aria-label="Shrink font" className={cell + "flex-1 text-sm"}>
                A<svg viewBox="0 0 5 14" className="h-[14px] w-[5px]"><path d="M0 0h5L2.500 3z" fill="#15428b" /></svg>
              </button>
            </div>
          </div>
          <div className="flex gap-[4px] font-['Liberation_Serif',serif] text-base text-[#222]">
            <div className={box + " w-[94px]"}>
              <button className={cell + "w-[26px] font-bold " + hot}>B</button>
              <button className={cell + "w-[27px] font-bold italic"}>I</button>
              <button className={cell + "flex-1 gap-[10px] font-bold"}><u>U</u><Caret /></button>
            </div>
            <div className={box + " w-[40px]"}>
              <button aria-label="Borders" className={cell + "flex-1 gap-2"}>
                <svg viewBox="0 0 14 14" className="h-[14px] w-[14px]" fill="none" stroke="#777"><path d="M.500 0v14M7.500 0v14M13.500 0v14M0 .500h14M0 7.500h14" strokeDasharray="1 1" /><path d="M0 13h14" stroke="#111" strokeWidth="2" /></svg>
                <Caret />
              </button>
            </div>
            <div className={box + " w-[78px]"}>
              <button aria-label="Fill colour" className={cell + "flex-1 gap-2"}>
                <svg viewBox="0 0 20 20" className="h-5 w-5"><path d="M5 8l6-5 5 6-6 4z" fill="#eef" stroke="#556" /><path d="M8 2v6" stroke="#556" /><path d="M16 7q3 3 1 6" stroke="#2a56b0" strokeWidth="2" fill="none" /><rect x="0" y="15" width="20" height="5" fill="#ffff00" /></svg>
                <Caret />
              </button>
              <button aria-label="Font colour" className={cell + "flex-1 gap-[6px]"}>
                <span className="flex flex-col items-center font-bold text-[#2f5597]"><span className="leading-4">A</span><i className="h-[5px] w-5 bg-[#ff0000]" /></span>
                <Caret />
              </button>
            </div>
            <div className={box + " w-[40px]"}>
              <button className={cell + "flex-1 gap-[6px]"}>
                <span className={"flex flex-col items-center text-[9px] leading-[10px] font-bold " + cjk}><span>wén</span><span className="text-[13px] leading-[13px] text-[#2f4fb0]">文</span></span>
                <Caret />
              </button>
            </div>
          </div>
        </div>
      </Group>

      <Group label="对齐方式" width="w-[271px]" launcher>
        <div className="flex px-[3px] pt-[13px]">
          <div className="flex flex-col gap-[13px]">
            <div className="flex gap-[4px]">
              <div className={box + " w-[80px]"}>
                <button aria-label="Top" className={cell + "flex-1"}><Lines d="M2 2.500h12M2 5.500h12M2 8.500h12" /></button>
                <button aria-label="Middle" className={cell + "flex-1 " + hot}><Lines d="M2 5.500h12M2 8.500h12M2 11.500h12" /></button>
                <button aria-label="Bottom" className={cell + "flex-1"}><Lines d="M2 8.500h12M2 11.500h12M2 14.500h12" /></button>
              </div>
              <div className={box + " w-[38px]"}>
                <button aria-label="Orientation" className={cell + "flex-1 gap-1"}>
                  <svg viewBox="0 0 18 18" className="h-[18px] w-[18px]"><text x="1" y="12" transform="rotate(-40 8 9)" className="font-['Liberation_Serif',serif] text-[13px] font-bold">ab</text><path d="M7 16l9-7M12 9h4v3" fill="none" stroke="#555" /></svg>
                  <Caret />
                </button>
              </div>
            </div>
            <div className="flex gap-[4px]">
              <div className={box + " w-[80px]"}>
                <button aria-label="Left" className={cell + "flex-1 " + hot}><Lines d={leftLines} /></button>
                <button aria-label="Center" className={cell + "flex-1"}><Lines d={centerLines} /></button>
                <button aria-label="Right" className={cell + "flex-1"}><Lines d={rightLines} /></button>
              </div>
              <div className={box + " w-[53px]"}>
                {[0, 1].map((k) => (
                  <button key={k} aria-label={k ? "Increase indent" : "Decrease indent"} className={cell + "flex-1"}>
                    <svg viewBox="0 0 16 16" className="h-4 w-4" fill="none" stroke="#111"><path d="M5 1.500h10M8 4.500h7M8 7.500h5M8 10.500h7M5 13.500h8" /><path d={k ? "M0 7.500h6M4 5l2 2-2 3" : "M0 7.500h6M2 5L0 7l2 3"} stroke="#2a56d0" /></svg>
                  </button>
                ))}
              </div>
            </div>
          </div>
          <div className="mx-[5px] w-px bg-[#a5c0e2]" />
          <div className="flex flex-col items-start gap-[13px]">
            <button className={"flex h-[26px] items-center gap-[5px] rounded-[2px] border border-[#b08040] px-[3px] leading-5 whitespace-nowrap " + hot}>
              <svg viewBox="0 0 16 16" className="h-4 w-4" fill="#fff" stroke="#556"><path d="M1 1h11v4H1zM1 8h8v6H1zM3 10h4M3 12h4" /><path d="M11 6h3v5h-4" fill="none" stroke="#2a56d0" /></svg>
              自动换行
            </button>
            <div className={"flex h-[26px] items-center rounded-[2px] border border-[#b08040] pl-[3px] leading-5 whitespace-nowrap " + hot}>
              <button className="flex items-center gap-[5px]">
                <svg viewBox="0 0 16 16" className="h-4 w-4" fill="#fff" stroke="#456"><path d="M.500 1.500h15v13H.500zM.500 5h15M.500 11h15M8 1v4M8 11v3" /><path d="M2 8h3M11 8h3M7 9l1-3 1 3" stroke="#111" /></svg>
                合并后居中
              </button>
              <button aria-label="Merge options" className="ml-px flex h-full items-center border-l border-[#c89048] px-[4px]"><Caret /></button>
            </div>
          </div>
        </div>
      </Group>

      <Group label="数字" width="w-[158px]" launcher>
        <div className="flex flex-col gap-[11px] px-[3px] pt-[13px]">
          <label className="flex h-[29px] items-center border border-[#abc1de] bg-[#eaf2fb] pr-[5px] text-black">
            <select aria-label="Number format" className="min-w-0 flex-1 appearance-none bg-transparent pl-[2px] leading-5 outline-none"><option>常规</option></select>
            <Caret />
          </label>
          <div className="flex gap-[4px] text-[13px] font-bold text-[#222]">
            <div className={box + " flex-1"}>
              <button aria-label="Currency" className={cell + "flex-1 gap-2"}>
                <svg viewBox="0 0 16 16" className="h-4 w-4"><rect x="0" y="1" width="14" height="8" fill="#2a56b0" /><circle cx="7" cy="5" r="3" fill="#cde" /><ellipse cx="9" cy="13" rx="5" ry="2" fill="#e8b830" stroke="#907010" /><ellipse cx="12" cy="10" rx="3" ry="2" fill="#e8b830" stroke="#907010" /></svg>
                <Caret />
              </button>
              <button className={cell + "w-[27px] font-['Liberation_Sans',sans-serif] font-normal"}>%</button>
              <button className={cell + "w-[26px] pb-2 text-lg"}>,</button>
            </div>
            <div className={box + " w-[53px] font-['Liberation_Sans',sans-serif] text-[9px] leading-[9px]"}>
              {[0, 1].map((k) => (
                <button key={k} aria-label={k ? "Decrease decimal" : "Increase decimal"} className={cell + "flex-1"}>
                  <svg viewBox="0 0 16 16" className="h-4 w-4">
                    <text x={k ? 1 : 8} y="7" className="text-[9px]">{k ? ".00" : ".0"}</text>
                    <text x={k ? 8 : 1} y="15" className="text-[9px]">{k ? ".0" : ".00"}</text>
                    <path d={k ? "M0 12h6M4 10l2 2-2 2" : "M0 4h6M2 2L0 4l2 2"} fill="none" stroke="#2a56d0" />
                  </svg>
                </button>
              ))}
            </div>
          </div>
        </div>
      </Group>

      <Group label="样式" width="w-[199px]">
        <div className="flex pl-1">
          <Big width="w-[62px]" lines={["条件格式"]} icon={<>{gridPath}<path d="M8 1h7v7H8zM8 15h7v6H8z" fill="#e8604c" /><path d="M8 8h12v7H8z" fill="#5a86e0" /><rect x="15" y="17" width="14" height="13" fill="#fff" stroke="#444" /><path d="M22 19l-4 2 4 2M18 25h4M23 19l4 2-4 2M23 27h4" fill="none" stroke="#111" /></>} />
          <Big width="w-[76px]" lines={["套用", "表格格式"]} caret icon={<>{gridPath}<path d="M8 8h14v14H8z" fill="#a8c0f0" opacity="0.800" />{brush}{brushTip}</>} />
          <Big width="w-[52px]" lines={["单元格", "样式"]} caret icon={<>{gridPath}<path d="M5 5h19v17H5z" fill="#a8c4fa" stroke="#88a" />{brush}{brushTip}</>} />
        </div>
      </Group>

      <Group label="单元格" width="w-[158px]">
        <div className="flex pl-[3px]">
          <Big width="w-[50px]" lines={["插入"]} icon={<><path d="M1 1h14v5H1zM8 1v5M1 18h14v10H1zM1 23h14M8 18v10" fill="#fff" stroke="#8c8c9c" /><path d="M16 9h14v7H16zM23 9v7" fill="#7fa4ee" stroke="#446" /><path d="M14 12H7M10 9l-3 3 3 3" fill="none" stroke="#222" /></>} />
          <Big width="w-[50px]" lines={["删除"]} icon={<><path d="M1 1h14v5H1zM8 1v5M1 18h14v10H1zM1 23h14M8 18v10" fill="#fff" stroke="#8c8c9c" /><path d="M7 8h12v8H7z" fill="#cfe0ff" stroke="#335" strokeDasharray="2 1" /><path d="M15 5l11 13M26 5L14 18" stroke="#e84030" strokeWidth="2" /></>} />
          <Big width="w-[50px]" lines={["格式"]} icon={<><path d="M1 4h28v22H1zM1 9h28M1 21h28M8 4v22M22 4v22M1 15h28" fill="#fff" stroke="#8c8c9c" /><rect x="9" y="10" width="12" height="11" fill="#5a8ae8" /><path d="M2 1h26M2 0v3M28 0v3" stroke="#333" strokeDasharray="2 1" /><path d="M2 26h10v3H2zM14 26h9v3h-9z" fill="#fff" stroke="#8c8c9c" /></>} />
        </div>
      </Group>

      <Group label="" width="w-[160px]">
        <div className="flex flex-col pl-[9px]">
          <Small icon={<path d="M3 2h10v3h-1q0-2-2-2H6l4 5-5 5h6q2 0 2-2h1l-1 4H2v-1l5-6-4-5z" fill="#222" />}>自动求和</Small>
          <Small icon={<><rect x="1" y="1" width="14" height="14" fill="#dce8ff" stroke="#4a70b8" /><path d="M6 3h4v5h3l-5 5-5-5h3z" fill="#2a66e0" /></>}>填充 <Caret /></Small>
          <Small icon={<path d="M9 2h5l1 3-7 9H3l-2-3zM5 7l5 4" fill="#fff" stroke="#667" />}>清除 <Caret /></Small>
        </div>
      </Group>
    </div>
  );
}

function Note() {
  return <i className="absolute top-0 right-0 h-0 w-0 border-t-[6px] border-l-[6px] border-t-[#d01010] border-l-transparent" />;
}

function Sheet() {
  const k = "relative border-r border-b border-black p-0 ";
  const n = k + "text-center font-bold";
  const rh = "border-r border-b border-[#9eb6ce] bg-[#e4ecf7] p-0 text-center align-bottom font-['Liberation_Serif',serif] text-[15px] leading-4 font-normal text-[#26354d]";
  const L = <td className="border-b border-black p-0" />;
  const green = "bg-[#e9f1dd] ";
  const note = "pl-[2px] font-['Roboto','Noto_Sans_CJK_SC',sans-serif] text-[13px] font-medium whitespace-nowrap ";
  const cols = ["A", "B", "C", "D", "E", "F", "G", "H", "I", "J", "K", "L"];
  return (
    <table className="w-full table-fixed border-separate border-spacing-0 bg-white text-[15px] leading-[19px] text-black">
      <colgroup>
        <col className="w-[35px]" />
        <col className="w-[94px]" />
        <col className="w-[44px]" />
        <col className="w-[129px]" />
        <col className="w-[79px]" />
        <col className="w-[86px]" />
        <col className="w-[72px]" />
        <col className="w-[49px]" />
        <col className="w-[89px]" />
        <col className="w-[214px]" />
        <col className="w-[132px]" />
        <col className="w-[173px]" />
        <col />
      </colgroup>
      <thead>
        <tr className="h-[20px]">
          <th className="border-r border-b border-[#9eb6ce] bg-[#a9c4e9] p-0">
            <svg viewBox="0 0 10 10" className="mr-1 ml-auto h-[10px] w-[10px]"><path d="M10 0v10H0z" fill="#dfe9f7" /></svg>
          </th>
          {cols.map((c) => (
            <th
              key={c}
              className={
                "border-r border-b p-0 text-center font-['Liberation_Serif',serif] text-[15px] leading-4 font-normal text-[#26354d] " +
                ("ABL".includes(c) ? "border-[#9eb6ce] bg-linear-to-b from-[#f4f7fb] to-[#d6dfec]" : "border-[#f09a38] bg-linear-to-b from-[#f8d692] to-[#f0bd5c]")
              }
            >
              {c}
            </th>
          ))}
        </tr>
      </thead>
      <tbody>
        <tr className="h-[29px]">
          <th className={rh}>4</th>
          <td rowSpan={3} className={k + "px-[2px] pt-[10px] align-top font-bold whitespace-nowrap"}>待确认光绘时<br />一起确认问题</td>
          <td className={n}>1</td>
          <td colSpan={6} className={k} />
          <td colSpan={3} className={k} />
          {L}
        </tr>
        {["5", "6"].map((r, i) => (
          <tr key={r} className="h-[30px]">
            <th className={rh}>{r}</th>
            <td className={n}>{i + 2}</td>
            <td colSpan={6} className={k} />
            <td colSpan={3} className={k} />
            {L}
          </tr>
        ))}
        <tr className="h-[59px]">
          <th className={rh}>7</th>
          <td className={k + "px-[2px] font-bold"}>重传文件<br />内容说明</td>
          <td colSpan={10} className={k}><Note /></td>
          {L}
        </tr>
        <tr className="h-[30px]">
          <th className={rh}>8</th>
          <td rowSpan={3} className={k + "pl-[2px] text-center whitespace-nowrap text-[#1a1ad8]"}>
            <b className="text-black">基础信息</b><br />（此处都采用<br />选择，无要求<br />时可不选）
          </td>
          <td className={n}>1</td>
          <td className={k + "pl-[2px] font-bold"}>阻焊面次</td>
          <td className={k + "text-center text-[#444]"}>双面印</td>
          <td colSpan={4} className={n}>互联电阻测试</td>
          <td className={k + green} />
          <td className={k + "text-center font-bold whitespace-nowrap"}>板边是否允许漏铜</td>
          <td className={k + "bg-[#ffff00] text-center text-[#444]"}>不允许</td>
          {L}
        </tr>
        <tr className="h-[30px]">
          <th className={rh}>9</th>
          <td className={n}>2</td>
          <td colSpan={2} className={n + " text-[#1010c8]"}>是否加<span className="text-[#e01010]">追溯号</span></td>
          <td colSpan={2} className={k + "bg-[#ffc000] text-center text-[#444]"}>不允许加<Note /></td>
          <td colSpan={2} className={n + " whitespace-nowrap"}>标记指定添加位置</td>
          <td className={k + "text-center text-[#444]"}>顶层丝印<Note /></td>
          <td className={k} />
          <td className={k} />
          {L}
        </tr>
        <tr className="h-[44px]">
          <th className={rh}>10</th>
          <td className={n}>3</td>
          <td className={k + "pl-[2px] font-bold"}><span className="text-[#e01010]">最小孔铜</span>要求<br />（um）</td>
          <td colSpan={2} className={k + green}><Note /></td>
          <td colSpan={3} className={n + " whitespace-nowrap"}>客户要求外层完成<span className="text-[#e01010]">铜厚</span>（um）</td>
          <td className={k + green}><Note /></td>
          <td className={k} />
          <td className={k} />
          {L}
        </tr>
        <tr className="h-[30px]">
          <th className={rh}>11</th>
          <td rowSpan={3} className={k} />
          <td className={n}>1</td>
          <td colSpan={9} className={k + note}>0.25mm的过孔阻焊塞孔</td>
          {L}
        </tr>
        <tr className="h-[30px]">
          <th className={rh}>12</th>
          <td className={n}>2</td>
          <td colSpan={9} className={k + note + "text-[#e01010]"}>
            39.37mil的孔公差按±1.97mil制作;98.43mil的孔公差按照+/-0.05mm制作；31.5mil的孔公差按照+5.91/-0制作；118.11mil、125.98mil的孔，公差按照±5mil制作
            <span className="absolute top-[-22px] left-[419px] h-[67px] w-[225px] border-[5px] border-[#ffff1a] shadow-[3px_3px_5px_rgba(0,0,0,0.6),inset_2px_2px_5px_rgba(0,0,0,0.5)]" />
          </td>
          {L}
        </tr>
        <tr className="h-[30px]">
          <th className={rh}>13</th>
          <td className={n}>3</td>
          <td colSpan={9} className={k} />
          {L}
        </tr>
      </tbody>
    </table>
  );
}

function Excel() {
  return (
    <section className={"absolute top-[515px] right-0 bottom-0 left-[769px] flex flex-col overflow-hidden bg-[#bfdbff] shadow-[0_0_12px_rgba(0,0,0,0.5)] " + cjk}>
      <div className="relative flex h-[34px] shrink-0 items-center bg-white pl-[48px]">
        <div className="flex h-[26px] w-[122px] items-center gap-2 rounded-r-full border border-l-0 border-[#b8bcc4] bg-[#fafbfd] pl-[18px]">
          <button aria-label="Save"><svg viewBox="0 0 14 14" className="h-[14px] w-[14px]"><path d="M0 0h14v14H0z" fill="#3a4cb0" /><path d="M3 0h8v6H3z" fill="#e8eefc" /><path d="M4 9h6v5H4z" fill="#222a60" /><path d="M5 10h2v3H5z" fill="#fff" /></svg></button>
          <button aria-label="Undo" className="ml-1 flex items-center gap-[6px]">
            <svg viewBox="0 0 14 14" className="h-[14px] w-[14px]"><path d="M3 6q6-5 8-1t-4 8" fill="none" stroke="#3060d0" strokeWidth="3" /><path d="M0 1v8h7z" fill="#3060d0" /></svg>
            <Caret />
          </button>
          <button aria-label="Redo" className="flex items-center gap-[6px]">
            <svg viewBox="0 0 14 14" className="h-[14px] w-[14px]"><path d="M11 6Q5 1 3 5t4 8" fill="none" stroke="#a8b4c8" strokeWidth="3" /><path d="M14 1v8H7z" fill="#a8b4c8" /></svg>
            <Caret className="opacity-50" />
          </button>
        </div>
        <button aria-label="Customize" className="ml-[9px]">
          <svg viewBox="0 0 8 9" className="h-[9px] w-2"><path d="M0 1h8M0 3h8" stroke="#15428b" /><path d="M0 5h8L4 9z" fill="#15428b" /></svg>
        </button>
        <h1 className="flex-1 pl-[108px] text-center font-['Open_Sans','Noto_Sans_CJK_SC',sans-serif] text-base whitespace-pre text-black">2S91A07DA0-预审指示.xls  [兼容模式] - Microsoft Excel</h1>
        <button aria-label="Office" className="absolute top-2 left-1 flex h-[46px] w-[46px] items-center justify-center rounded-full border-2 border-[#9aa8c0] bg-radial from-white to-[#c3cfe2] shadow-md">
          <svg viewBox="0 0 30 30" className="h-[30px] w-[30px]" fill="none" strokeWidth="4">
            <rect x="4" y="3" width="10" height="12" stroke="#e2582a" />
            <rect x="18" y="8" width="7" height="7" strokeWidth="3" stroke="#4a9ad8" />
            <rect x="5" y="19" width="9" height="9" stroke="#f2b622" />
            <rect x="18" y="18" width="9" height="9" stroke="#5fae3f" />
          </svg>
        </button>
      </div>
      <nav className="flex h-[30px] shrink-0 items-end gap-[6px] pl-[59px] text-[15px] text-[#15428b]">
        {["开始", "插入", "页面布局", "公式", "数据", "审阅", "视图"].map((t, i) => (
          <button key={t} className={"h-[29px] px-3 leading-6 " + (i === 0 ? "rounded-t border border-b-0 border-[#8fb0dd] bg-[#e6effa] px-[11px]" : "")}>
            {t}
          </button>
        ))}
      </nav>
      <Ribbon />
      <div className="mt-px flex h-[21px] shrink-0 items-stretch border-y border-[#7f9db9] bg-white">
        <label className="flex w-[159px] items-center pr-1">
          <input aria-label="Name box" defaultValue="C14" className="w-full min-w-0 bg-transparent pr-4 text-center font-['Liberation_Serif',serif] text-[15px] leading-4 outline-none" />
          <svg viewBox="0 0 7 5" className="h-[5px] w-[7px] shrink-0"><path d="M0 0h7L3 5z" fill="#111" /></svg>
        </label>
        <div className="flex w-[76px] items-center justify-between rounded-l-full border-l border-r border-[#7f9db9] bg-linear-to-b from-[#dde8f6] to-[#aec4e3] pr-1 pl-[3px]">
          <i className="h-3 w-3 rounded-full bg-radial from-white to-[#9fb4d2]" />
          <span className="font-['Liberation_Serif',serif] text-sm leading-4 font-bold text-[#444] italic">fx</span>
        </div>
        <input aria-label="Formula" className="min-w-0 flex-1 px-1 outline-none" />
      </div>
      <div className="h-[3px] shrink-0 bg-[#bfd4ee]" />
      <Sheet />
    </section>
  );
}

/* ---------- page ---------- */

export default function App() {
  return (
    <div className="relative flex h-screen w-full overflow-hidden bg-[#00a2f2] pl-2">
      <main className="flex min-w-0 flex-1 flex-col bg-black">
        <div className="flex h-6 shrink-0 items-start gap-3 border-b-2 border-[#528585] bg-white pr-[9px] pl-2 font-['Open_Sans',sans-serif] text-base leading-4 text-[#8b8b8b]">
          <XLogo />
          <span className="flex-1">Graphic Editor 9.07b2 (00@HY-HYCAM-PC064 - Windows, pid:10160)</span>
          <WindowButtons gap="gap-[34px]" />
        </div>
        <MenuBar />
        <div className="flex min-h-0 flex-1">
          <SidePanel />
          <div className="relative min-w-0 flex-1 overflow-hidden bg-black">
            <Board />
            <DrillChart />
          </div>
          <ToolPalette />
        </div>
        <StatusBar />
      </main>
      <DrillToolManager />
      <Excel />
    </div>
  );
}
